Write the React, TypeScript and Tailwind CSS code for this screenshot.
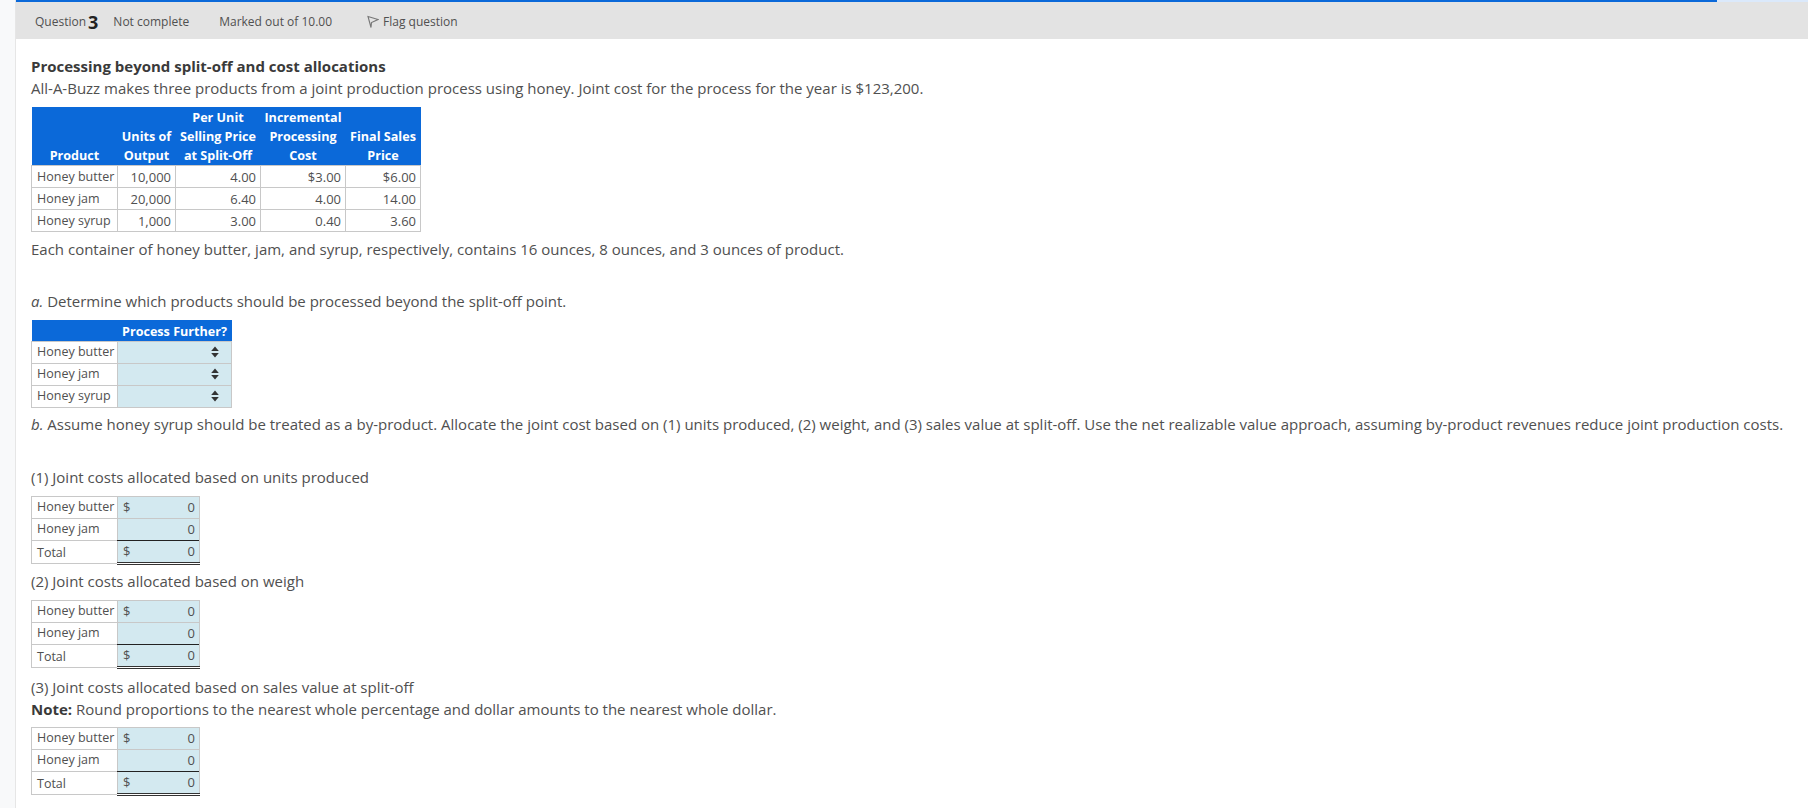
import { ReactNode } from "react";

const font = "font-['Open_Sans',sans-serif]";

function UpDown() {
  return (
    <svg width="8" height="12" viewBox="0 0 8 12" className="fill-[#333]">
      <path d="M4 0.5 L7.8 5 L0.2 5 Z" />
      <path d="M4 11.5 L7.8 7 L0.2 7 Z" />
    </svg>
  );
}

function FlagIcon() {
  return (
    <svg width="12" height="14" viewBox="0 0 12 14" fill="none" stroke="#777" strokeWidth="1.1">
      <path d="M1 1.5 L11 4.5 L4.5 7.5 L4 12.5 Z" />
    </svg>
  );
}

function Th({ children, className = "" }: { children?: ReactNode; className?: string }) {
  return (
    <th className={`p-0 align-bottom text-center text-[12.6px] font-bold leading-[19px] text-white ${className}`}>
      {children}
    </th>
  );
}

function Td({ children, className = "" }: { children?: ReactNode; className?: string }) {
  return (
    <td className={`h-[22px] border border-[#c8c8c8] py-0 pl-[5px] pr-[4px] text-[13px] leading-[20px] text-[#505050] ${className}`}>
      {children}
    </td>
  );
}

const productRows = [
  ["Honey butter", "10,000", "4.00", "$3.00", "$6.00"],
  ["Honey jam", "20,000", "6.40", "4.00", "14.00"],
  ["Honey syrup", "1,000", "3.00", "0.40", "3.60"],
];

function ProductTable() {
  return (
    <table className="w-[389px] table-fixed border-collapse">
      <colgroup>
        <col className="w-[86px]" />
        <col className="w-[58px]" />
        <col className="w-[85px]" />
        <col className="w-[85px]" />
        <col className="w-[75px]" />
      </colgroup>
      <thead>
        <tr className="h-[20px] bg-[#0b69d9]">
          <Th />
          <Th />
          <Th>Per Unit</Th>
          <Th>Incremental</Th>
          <Th />
        </tr>
        <tr className="bg-[#0b69d9]">
          <Th />
          <Th className="whitespace-nowrap">Units of</Th>
          <Th className="whitespace-nowrap">Selling Price</Th>
          <Th>Processing</Th>
          <Th className="whitespace-nowrap">Final Sales</Th>
        </tr>
        <tr className="bg-[#0b69d9]">
          <Th>Product</Th>
          <Th>Output</Th>
          <Th className="whitespace-nowrap">at Split-Off</Th>
          <Th>Cost</Th>
          <Th>Price</Th>
        </tr>
      </thead>
      <tbody>
        {productRows.map((row) => (
          <tr key={row[0]}>
            {row.map((cell, i) => (
              <Td key={i} className={i === 0 ? "whitespace-nowrap !text-[12.5px]" : "text-right"}>
                {cell}
              </Td>
            ))}
          </tr>
        ))}
      </tbody>
    </table>
  );
}

function ProcessTable() {
  return (
    <table className="w-[200px] table-fixed border-collapse">
      <colgroup>
        <col className="w-[86px]" />
        <col className="w-[114px]" />
      </colgroup>
      <thead>
        <tr className="h-[21px] bg-[#0b69d9]">
          <Th />
          <Th className="whitespace-nowrap">Process Further?</Th>
        </tr>
      </thead>
      <tbody>
        {["Honey butter", "Honey jam", "Honey syrup"].map((name) => (
          <tr key={name}>
            <Td className="whitespace-nowrap !text-[12.5px]">{name}</Td>
            <Td className="bg-[#d3e9f0]">
              <div className="flex justify-end pr-[8px]">
                <UpDown />
              </div>
            </Td>
          </tr>
        ))}
      </tbody>
    </table>
  );
}

function AllocationTable() {
  return (
    <table className="w-[168px] table-fixed border-collapse">
      <colgroup>
        <col className="w-[86px]" />
        <col className="w-[82px]" />
      </colgroup>
      <tbody>
        <tr>
          <Td className="whitespace-nowrap !text-[12.5px]">Honey butter</Td>
          <Td className="bg-[#d3e9f0]">
            <div className="flex justify-between">
              <span>$</span>
              <span>0</span>
            </div>
          </Td>
        </tr>
        <tr>
          <Td className="!text-[12.5px]">Honey jam</Td>
          <Td className="bg-[#d3e9f0] text-right">0</Td>
        </tr>
        <tr>
          <Td className="!h-[23px] pt-[2px] !text-[12.5px]">Total</Td>
          <Td className="border-t-[#222] border-b-[3px] border-b-[#333] border-double bg-[#d3e9f0]">
            <div className="flex justify-between">
              <span>$</span>
              <span>0</span>
            </div>
          </Td>
        </tr>
      </tbody>
    </table>
  );
}

export default function App() {
  return (
    <div className={`flex h-[808px] w-[1808px] overflow-hidden bg-white ${font}`}>
      <div className="w-[16px] shrink-0 border-r border-[#e6e6e6] bg-[#f8f9fa]" />
      <div className="min-w-0 flex-1">
        <div className="flex h-[2px]">
          <div className="w-[1701px] bg-[#0b69d9]" />
          <div className="flex-1 bg-[#dbe9fb]" />
        </div>
        <div className="flex h-[37px] items-center bg-[#e3e3e3] pl-[19px] pt-[2px] text-[12px] text-[#505050]">
          <span className="flex items-center">
            Question <span className="ml-[2px] text-[18px] font-bold leading-none text-[#222]">3</span>
          </span>
          <span className="ml-[15px]">Not complete</span>
          <span className="ml-[30px]">Marked out of 10.00</span>
          <span className="ml-[35px] flex items-center gap-[4px]">
            <FlagIcon />
            Flag question
          </span>
        </div>
        <div className="pl-[15px] pt-[16px] text-[15px] leading-[22px] text-[#505050]">
          <p className="font-bold text-[#3a3a3a]">Processing beyond split-off and cost allocations</p>
          <p>
            All-A-Buzz makes three products from a joint production process using honey. Joint cost for the process for
            the year is $123,200.
          </p>
          <div className="mt-[8px]">
            <ProductTable />
          </div>
          <p className="mt-[6px]">
            Each container of honey butter, jam, and syrup, respectively, contains 16 ounces, 8 ounces, and 3 ounces of
            product.
          </p>
          <p className="mt-[30px]">
            <i>a.</i> Determine which products should be processed beyond the split-off point.
          </p>
          <div className="mt-[8px]">
            <ProcessTable />
          </div>
          <p className="mt-[5px] whitespace-nowrap">
            <i>b.</i> Assume honey syrup should be treated as a by-product. Allocate the joint cost based on (1) units
            produced, (2) weight, and (3) sales value at split-off. Use the net realizable value approach, assuming
            by-product revenues reduce joint production costs.
          </p>
          <p className="mt-[31px]">(1) Joint costs allocated based on units produced</p>
          <div className="mt-[8px]">
            <AllocationTable />
          </div>
          <p className="mt-[5px]">(2) Joint costs allocated based on weigh</p>
          <div className="mt-[8px]">
            <AllocationTable />
          </div>
          <p className="mt-[7px]">(3) Joint costs allocated based on sales value at split-off</p>
          <p>
            <b className="text-[#3a3a3a]">Note:</b> Round proportions to the nearest whole percentage and dollar amounts
            to the nearest whole dollar.
          </p>
          <div className="mt-[7px]">
            <AllocationTable />
          </div>
        </div>
      </div>
    </div>
  );
}
